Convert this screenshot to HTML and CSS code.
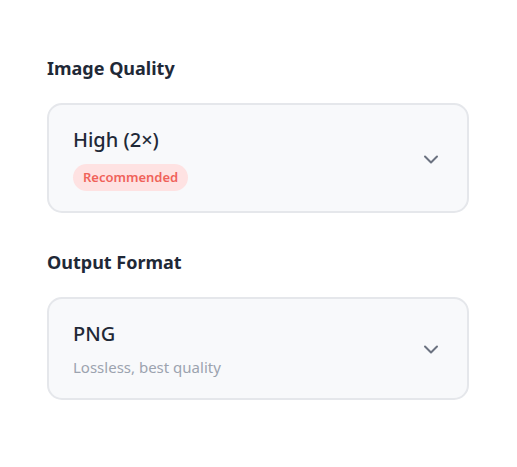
FILE: index.html
```html
<!DOCTYPE html>
<html lang="en">
<head>
  <meta charset="UTF-8">
  <meta name="viewport" content="width=device-width, initial-scale=1.0">
  <title>Export Settings</title>
  <link rel="stylesheet" href="styles.css">
</head>
<body>
  <div class="settings">
    <!-- Image quality -->
    <section class="field">
      <h2 class="field-label">Image Quality</h2>
      <div class="select-box">
        <div class="select-text">
          <div class="select-value">High (2×)</div>
          <span class="badge">Recommended</span>
        </div>
        <svg class="chevron" width="16" height="16" viewBox="0 0 16 16" fill="none">
          <path d="M2 5.5l6 6 6-6" stroke="currentColor" stroke-width="2" stroke-linecap="round" stroke-linejoin="round"/>
        </svg>
      </div>
    </section>

    <!-- Output format -->
    <section class="field">
      <h2 class="field-label">Output Format</h2>
      <div class="select-box">
        <div class="select-text">
          <div class="select-value">PNG</div>
          <div class="select-hint">Lossless, best quality</div>
        </div>
        <svg class="chevron" width="16" height="16" viewBox="0 0 16 16" fill="none">
          <path d="M2 5.5l6 6 6-6" stroke="currentColor" stroke-width="2" stroke-linecap="round" stroke-linejoin="round"/>
        </svg>
      </div>
    </section>
  </div>
</body>
</html>
```

FILE: styles.css
```css
* {
  margin: 0;
  padding: 0;
  box-sizing: border-box;
}

body {
  font-family: 'Noto Sans', 'Open Sans', sans-serif;
  background: #ffffff;
  color: #1f2937;
}

.settings {
  padding: 54px 48px 0 47px;
  display: flex;
  flex-direction: column;
  gap: 35px;
}

.field-label {
  font-size: 18px;
  font-weight: 700;
  line-height: 28px;
  color: #1f2937;
  margin-bottom: 21px;
}

.select-box {
  display: flex;
  align-items: center;
  justify-content: space-between;
  background: #f8f9fb;
  border: 2px solid #e5e7eb;
  border-radius: 15px;
  padding: 21px 28px 20px 24px;
}

.select-text {
  display: flex;
  flex-direction: column;
  align-items: flex-start;
  gap: 10px;
}

.select-value {
  font-size: 20px;
  font-weight: 500;
  line-height: 28px;
  color: #1f2937;
}

.badge {
  background: #fee2e2;
  color: #f0625a;
  font-size: 13px;
  font-weight: 600;
  line-height: 27px;
  padding: 0 10px;
  border-radius: 14px;
}

.select-hint {
  font-size: 15px;
  line-height: 22px;
  color: #9ca3af;
  margin-top: -2px;
}

.chevron {
  color: #6b7280;
  flex-shrink: 0;
}
```
